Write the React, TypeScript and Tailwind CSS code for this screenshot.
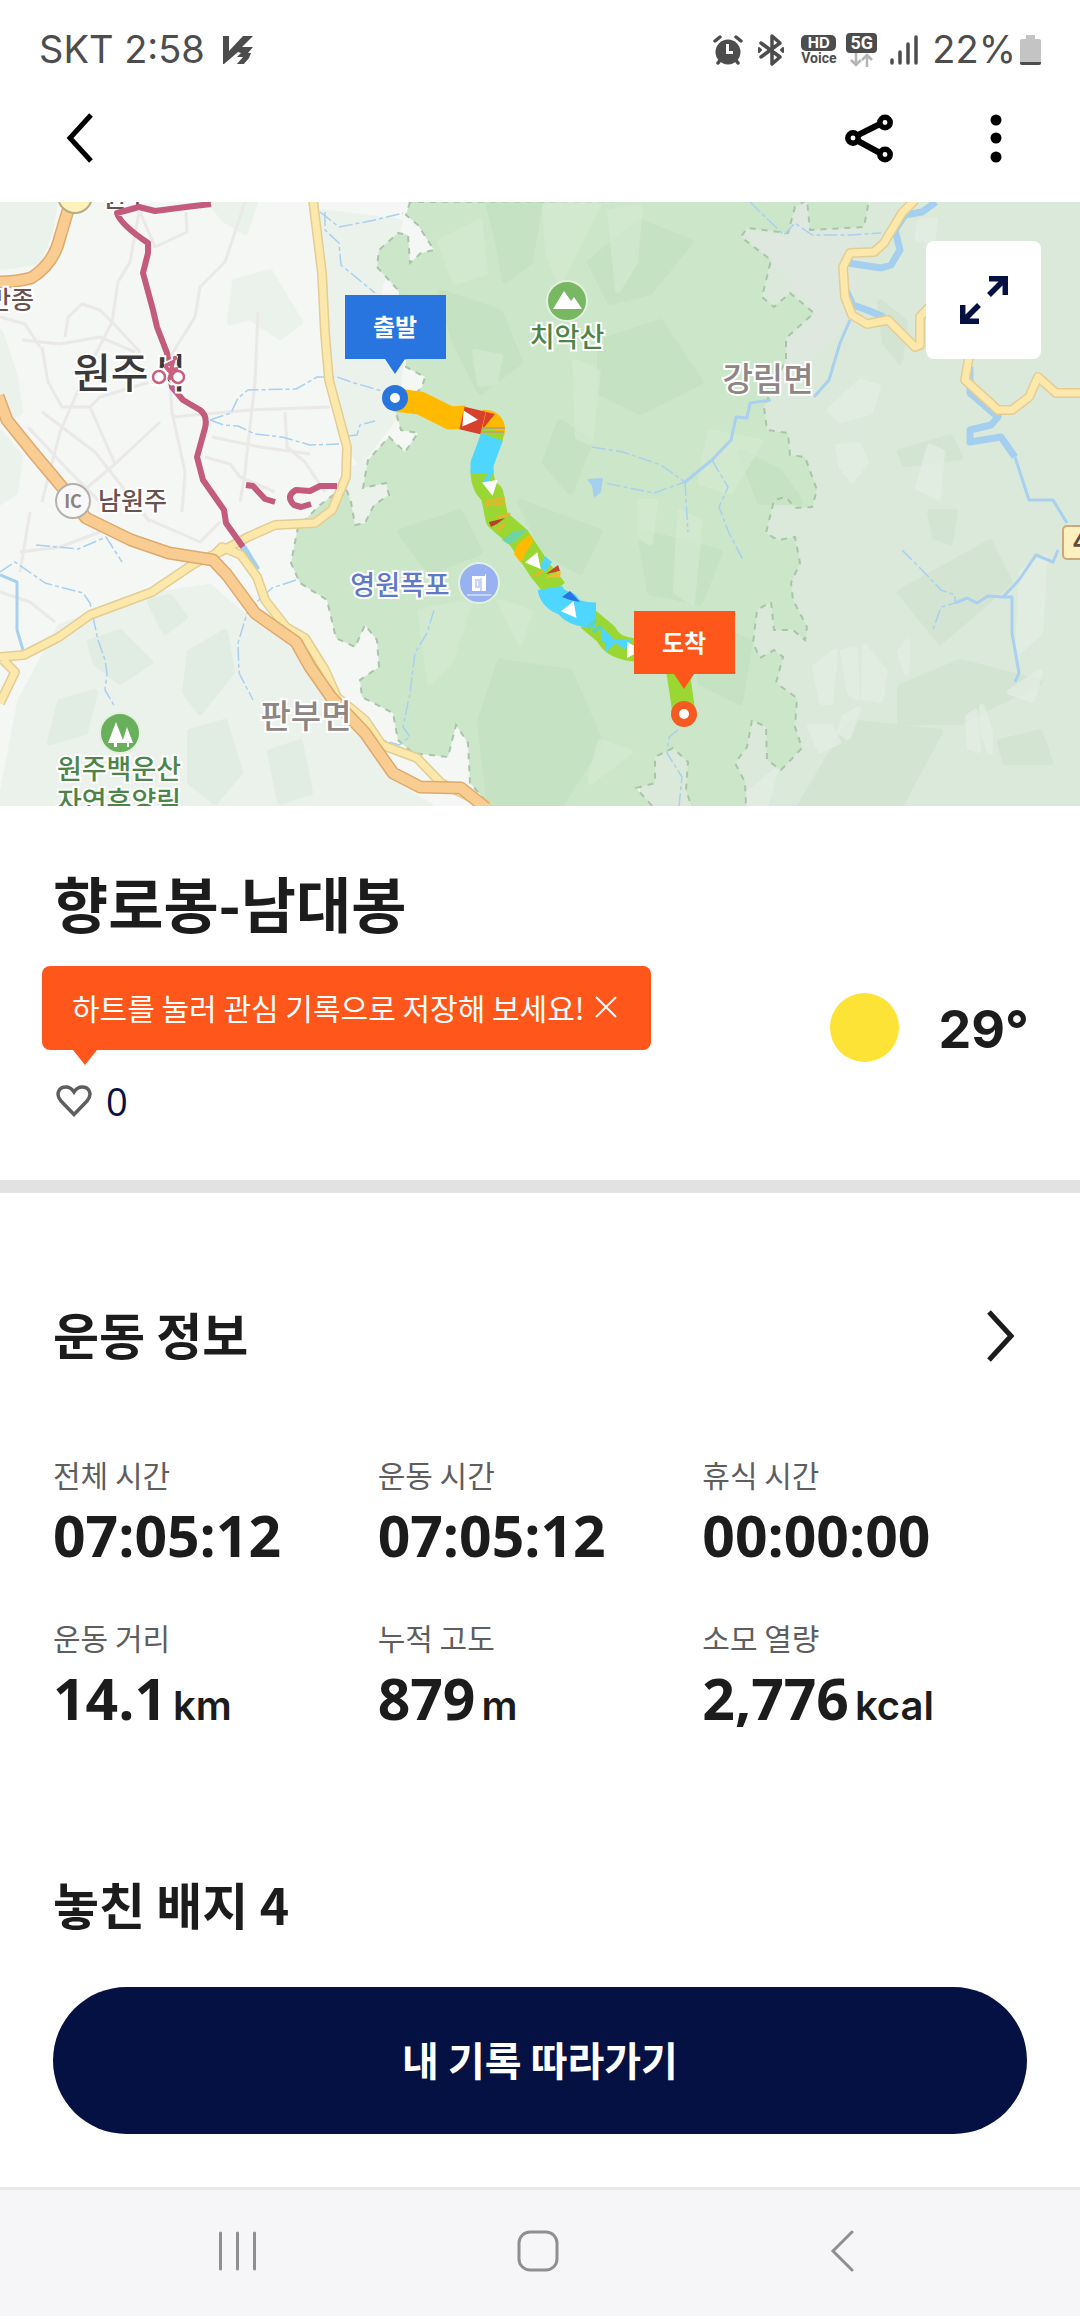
import { useState } from 'react'

interface Stat {
  label: string
  value: string
  unit?: string
}

const STATS: Stat[] = [
  { label: '전체 시간', value: '07:05:12' },
  { label: '운동 시간', value: '07:05:12' },
  { label: '휴식 시간', value: '00:00:00' },
  { label: '운동 거리', value: '14.1', unit: 'km' },
  { label: '누적 고도', value: '879', unit: 'm' },
  { label: '소모 열량', value: '2,776', unit: 'kcal' },
]

const PARK =
  'M410 0 L406 13 L418 23 L434 48 L421 51 L410 61 L408 33 L398 31 L379 48 L377 65 L398 88 L406 120 L406 165 L425 175 L422 185 L396 211 L401 228 L418 231 L405 250 L389 235 L368 258 L363 286 L386 281 L389 293 L374 303 L365 321 L355 323 L351 300 L345 284 L320 303 L298 325 L291 361 L300 381 L327 398 L336 436 L355 445 L365 423 L377 438 L379 465 L360 478 L362 495 L393 511 L398 538 L413 551 L448 555 L456 523 L468 541 L470 581 L492 606 L654 606 L636 586 L655 581 L655 555 L673 546 L688 560 L686 588 L692 606 L746 606 L745 580 L735 561 L747 545 L752 518 L766 525 L767 558 L781 568 L802 546 L795 525 L797 496 L776 481 L783 455 L774 448 L760 456 L753 441 L757 408 L771 400 L774 428 L793 428 L805 438 L807 425 L793 398 L791 381 L800 361 L795 335 L778 338 L766 331 L774 298 L786 295 L795 306 L812 305 L817 288 L805 255 L790 253 L788 231 L767 228 L764 205 L786 158 L786 136 L814 111 L790 91 L774 105 L762 95 L771 58 L741 35 L747 26 L788 31 L795 5 L807 -2 L810 28 L864 25 L869 -2 Z'

const PARK_DARK = [
  'M488 0 L540 0 L530 60 L505 78 L498 40 Z',
  'M590 60 L640 20 L690 40 L650 90 L610 100 Z',
  'M440 90 L500 110 L520 160 L480 190 L455 140 Z',
  'M600 140 L660 120 L700 180 L640 210 L600 190 Z',
  'M400 330 L460 310 L480 350 L430 370 Z',
  'M520 300 L600 330 L580 370 L545 350 Z',
  'M500 460 L570 470 L600 540 L560 604 L490 604 L480 520 Z',
  'M640 330 L720 350 L700 400 L650 390 Z',
  'M700 420 L750 440 L740 500 L700 480 Z',
  'M560 220 L590 240 L570 290 L545 260 Z',
  'M740 250 L780 270 L800 300 L760 300 Z',
]

const PARK_LIGHT = [
  'M545 5 L600 0 L580 40 L560 80 L548 50 Z',
  'M610 10 L640 5 L635 60 L618 88 Z',
  'M440 40 L480 20 L485 70 L455 80 Z',
  'M475 150 L500 155 L495 180 L480 182 Z',
  'M575 160 L598 170 L590 240 L578 235 Z',
  'M640 300 L655 300 L650 340 L640 335 Z',
  'M680 310 L700 320 L692 400 L676 390 Z',
  'M420 410 L470 400 L450 460 L430 480 Z',
  'M600 540 L630 550 L590 580 Z',
  'M710 230 L760 240 L730 290 L700 280 Z',
  'M500 400 L530 410 L520 440 Z',
]

const EAST_DARK = [
  'M900 390 L990 340 L1010 380 L940 440 Z',
  'M900 485 L960 460 L1040 480 L960 520 L900 520 Z',
  'M850 520 L940 530 L900 604 L800 604 Z',
  'M930 310 L955 310 L950 340 L935 335 Z',
  'M1000 540 L1040 530 L1050 560 L1005 560 Z',
  'M900 250 L950 235 L960 255 L905 262 Z',
  'M880 100 L905 120 L900 160 L885 140 Z',
]

const EAST_LIGHT = [
  'M830 208 L860 180 L878 185 L870 210 L840 218 Z',
  'M838 245 L858 243 L866 260 L852 278 L842 265 Z',
  'M930 245 L942 250 L938 295 L918 285 Z',
  'M815 465 L835 450 L830 500 L822 500 Z',
  'M843 450 L855 448 L857 495 L850 490 Z',
  'M865 445 L885 470 L880 498 L864 495 Z',
  'M810 525 L830 525 L838 540 L820 548 Z',
  'M845 515 L858 508 L848 535 L840 530 Z',
  'M1022 370 L1045 355 L1040 430 L1018 450 Z',
  'M1010 490 L1040 470 L1032 498 Z',
  'M968 515 L975 510 L978 548 L970 545 Z',
  'M982 505 L990 530 L990 550 L983 530 Z',
  'M900 450 L908 440 L906 470 Z',
  'M750 590 L775 570 L765 604 L750 604 Z',
  'M920 20 L935 18 L932 40 L918 36 Z',
]

const WEST_SHADE = [
  'M0 0 L55 0 L50 30 L38 60 L0 65 Z',
  'M235 80 L270 70 L285 95 L300 120 L280 135 L250 115 L230 120 Z',
  'M0 130 L15 175 L20 210 L0 220 Z',
  'M0 230 L20 255 L15 290 L0 300 Z',
  'M60 425 L140 395 L210 385 L250 420 L300 450 L330 500 L390 580 L430 604 L0 604 L20 500 Z',
  'M210 0 L255 0 L245 30 L225 18 Z',
  'M320 10 L400 20 L378 90 L400 165 L395 215 L360 260 L340 230 L330 120 Z',
  'M345 270 L365 262 L390 290 L350 330 L345 300 Z',
]

const WEST_DARK = [
  'M90 440 L120 430 L150 460 L120 480 L95 460 Z',
  'M190 450 L225 430 L232 470 L200 510 L185 490 Z',
  'M60 500 L95 490 L85 530 L50 540 Z',
  'M190 530 L225 520 L240 570 L215 600 L190 580 Z',
  'M270 550 L300 540 L310 590 L280 600 Z',
  'M150 400 L170 395 L185 415 L165 430 Z',
]

const STREETS = [
  'M139 10 L130 60 L118 80 L112 120 L84 175 L60 230 L42 300',
  'M245 0 L225 60 L200 85 L195 115 L170 155',
  'M140 10 L155 45 L187 30 L186 10',
  'M22 138 L60 142 L100 135 L135 150',
  'M42 145 L48 180 L62 205 L90 205 L100 195 L150 180',
  'M65 135 L68 115 L82 102 L100 108 L112 120 L140 150',
  'M258 110 L255 180 L245 270 L240 300',
  'M168 150 L172 210 L185 270 L182 310',
  'M172 215 L250 208 L330 205',
  'M212 235 L260 245 L310 252',
  'M285 210 L287 245 L305 260 L325 290',
  'M28 225 L70 270 L110 310',
  'M90 205 L115 262 L160 220',
  'M42 210 L95 250 L150 320',
  'M115 262 L70 300',
  'M205 255 L230 262 L240 275 L275 290',
  'M30 310 L20 370',
  'M20 350 L60 345 L100 330',
  'M0 390 L30 400 L55 420',
  'M150 318 L200 340 L220 320',
  'M0 115 L25 122 L40 145',
]

const STREAMS = [
  'M320 10 L339 25 L375 18 L403 11',
  'M325 10 L325 28 L339 41 L341 63 L375 91',
  'M210 218 L231 211 L238 196 L248 188 L296 187 L317 175 L337 175 L351 180 L382 189',
  'M210 218 L224 223 L238 224 L255 232 L282 235 L310 243 L339 242',
  'M348 234 L357 233 L360 223 L375 219',
  'M0 370 L15 360 L45 381 L83 391 L90 401 L98 438 L105 458 L107 471 L105 488 L115 505',
  'M296 378 L272 386 L248 408 L238 441 L239 471 L253 498',
  'M434 408 L427 431 L415 451 L410 491 L403 525 L410 535 L399 543 L382 538',
  'M36 343 L78 347 L106 335 L122 360',
  'M750 0 L784 33 L795 21 L812 33 L850 33 L881 31',
  'M592 245 L623 250 L661 263 L685 280 L654 291 L605 281',
  'M685 280 L688 330',
  'M712 258 L728 285 L719 305 L729 331 L743 358',
  'M902 348 L919 365 L941 388 L955 393 L955 401 L941 405 L933 428',
  'M678 528 L669 535 L667 551 L682 575 L679 604',
]

const RIVERS = [
  'M936 0 L922 10 L905 13 L895 28 L900 48 L891 63 L881 66 L848 61',
  'M846 88 L853 103 L867 108 L884 115',
  'M970 165 L970 191 L998 215 L991 223 L970 228 L970 240 L1001 235 L1015 255',
  'M243 345 L257 368',
]

const SMALL_RIVERS = [
  'M850 118 L840 141 L829 178 L814 195',
  'M771 198 L750 201 L747 216 L736 215 L731 238 L712 258 L685 280',
  'M1015 255 L1029 298 L1053 298 L1067 321',
  'M955 401 L967 396 L977 401 L988 394 L1003 395 L1019 378 L1036 353 L1053 360 L1058 348',
  'M1003 395 L1012 395 L1012 431 L1019 471 L1015 480',
  'M0 373 L17 380 L17 428 L23 448',
]

const YELLOW_ROADS = [
  'M313 -2 L322 71 L325 131 L329 178 L347 245 L346 275 L332 308 L315 321 L275 323 L248 335 L220 350 L195 361 L152 390 L90 413 L59 435 L24 453 L0 455',
  'M3 458 L15 470 L0 501',
  'M215 352 L222 345 L241 353 L257 375 L265 398 L286 425 L305 436 L325 468 L337 495 L365 518 L382 543 L417 556 L441 581 L489 604',
  'M915 -2 L902 11 L884 41 L874 50 L850 51 L843 65 L845 95 L852 113 L867 122 L888 118 L915 145 L920 143 L920 115 L933 101 L969 155 L965 178 L998 208 L1012 208 L1029 195 L1038 175 L1056 191 L1082 191',
]

const HIGHWAYS = [
  'M69 5 L60 35 Q54 62 31 76 Q16 80 -2 80',
  'M-2 194 L7 218 L31 248 L62 285 L86 316 L131 338 L169 351 L213 358 L227 373 L255 411 L296 440 L310 465 L331 495 L365 531 L393 571 L420 585 L461 586 L486 606',
]

const BIKE_PATHS = [
  'M211 2 L186 5 L155 9 L139 5 L117 11 Q120 22 148 41 L148 51 L143 71 L153 108 L157 125 L167 151 L172 185 L183 198 L200 208 Q208 214 205 226 L197 255 L203 278 L224 308 L226 321 L243 345',
  'M246 283 L253 284 L265 297 L275 300',
  'M337 284 L320 284 L310 289 L296 288 Q285 294 294 303 L301 305 L311 302',
]

const ARROWS = [
  { x: 469, y: 217, angle: 5 },
  { x: 491, y: 285, angle: 80 },
  { x: 535, y: 360, angle: 50 },
  { x: 571, y: 409, angle: 52 },
  { x: 633, y: 448, angle: 0 },
]

function StatusBar() {
  return (
    <div className="flex h-24 items-center justify-between pl-[39px] pr-[39px] pt-[3px] text-[#4d4d4d]">
      <div className="flex items-center gap-[18px]">
        <span className="font-['Inter',sans-serif] text-[38px]">SKT 2:58</span>
        <svg className="h-7 w-[30px]" viewBox="0 0 30 28" fill="currentColor" aria-hidden="true">
          <path d="M0 0 H6 V15 L20 0 H30 L19 11 H30 L25 17 H28 L26 22 L20 29 H13 L20 21 H14 L18 17 L15 16 L1 28 H0 Z" />
        </svg>
      </div>
      <div className="flex items-center">
        <svg className="mr-[14px] h-[30px] w-[30px]" viewBox="0 0 30 30" aria-hidden="true">
          <circle cx="15" cy="17" r="12.5" fill="currentColor" />
          <path d="M2 6 L7 2 M28 6 L23 2 M5 28 L8 24 M25 28 L22 24" stroke="currentColor" strokeWidth="3.5" strokeLinecap="round" />
          <path d="M14.5 9 V17.5 H20" stroke="white" strokeWidth="3" fill="none" />
        </svg>
        <svg className="mr-4 h-8 w-7" viewBox="0 0 28 32" fill="none" stroke="currentColor" strokeWidth="3.5" strokeLinejoin="round" strokeLinecap="round" aria-hidden="true">
          <path d="M4 9 L23 23 L15 30 V2 L23 9 L4 23" />
          <path d="M2 14 L4 16 L2 18 Z M26 14 L24 16 L26 18 Z" strokeWidth="2" />
        </svg>
        <div className="mr-[10px] flex w-[35px] flex-col items-center">
          <span className="flex h-4 w-full items-center justify-center rounded-[5px] bg-[#4d4d4d] font-['Inter',sans-serif] text-[15px] font-bold leading-none text-white">HD</span>
          <span className="font-['Roboto',sans-serif] text-[14px] font-bold leading-[14px]">Voice</span>
        </div>
        <div className="mr-[13px] flex w-[31px] flex-col items-center">
          <span className="flex h-5 w-full items-center justify-center rounded bg-[#4d4d4d] font-['Roboto',sans-serif] text-lg font-bold leading-none text-white">5G</span>
          <svg className="h-[14px] w-6" viewBox="0 0 24 14" fill="none" stroke="#b5b5b5" strokeWidth="2.5" aria-hidden="true">
            <path d="M6 0 V12 M1 7 L6 12 L11 7 M17 14 V2 M12 7 L17 2 L22 7" />
          </svg>
        </div>
        <svg className="mr-[14px] h-[30px] w-7" viewBox="0 0 28 30" stroke="currentColor" strokeWidth="3.5" strokeLinecap="round" aria-hidden="true">
          <path d="M2 25 V28 M10 17 V28 M18 9 V28 M26 2 V28" />
        </svg>
        <span className="mr-1 font-['Inter',sans-serif] text-[38px]">22%</span>
        <svg className="h-[30px] w-[21px]" viewBox="0 0 21 30" aria-hidden="true">
          <path d="M6 0 H15 V4 H19 Q21 4 21 6 V28 Q21 30 19 30 H2 Q0 30 0 28 V6 Q0 4 2 4 H6 Z" fill="#c4c4c4" />
          <path d="M0 27 H21 V28 Q21 30 19 30 H2 Q0 30 0 28 Z" fill="#4d4d4d" />
        </svg>
      </div>
    </div>
  )
}

function Header() {
  return (
    <header className="flex h-[106px] items-start justify-between pl-[66px] pr-[78px] pt-[17px] text-black">
      <button type="button" aria-label="뒤로">
        <svg className="h-[50px] w-7" viewBox="0 0 28 50" fill="none" stroke="currentColor" strokeWidth="5">
          <path d="M25 2 L4 25 L25 48" />
        </svg>
      </button>
      <div className="flex items-center gap-[97px]">
        <button type="button" aria-label="공유">
          <svg className="h-[50px] w-12" viewBox="0 0 48 50" fill="none" stroke="currentColor" strokeWidth="5.5">
            <path d="M13 22 L35 11 M13 28 L35 40" strokeWidth="6" />
            <circle cx="8" cy="25" r="5.2" />
            <circle cx="40" cy="9.5" r="5.2" />
            <circle cx="40" cy="41.5" r="5.2" />
          </svg>
        </button>
        <button type="button" aria-label="더보기">
          <svg className="h-[50px] w-3" viewBox="0 0 12 50" fill="currentColor">
            <circle cx="6" cy="7" r="5.5" />
            <circle cx="6" cy="25" r="5.5" />
            <circle cx="6" cy="44" r="5.5" />
          </svg>
        </button>
      </div>
    </header>
  )
}

function Lines({ items, color, width, dash }: { items: string[]; color: string; width: number; dash?: string }) {
  return (
    <g fill="none" stroke={color} strokeWidth={width} strokeLinejoin="round" strokeDasharray={dash}>
      {items.map(d => (
        <path key={d} d={d} />
      ))}
    </g>
  )
}

function Areas({ items, color }: { items: string[]; color: string }) {
  return (
    <g fill={color} stroke={color} strokeWidth="6" strokeLinejoin="round" opacity="0.6">
      {items.map(d => (
        <path key={d} d={d} />
      ))}
    </g>
  )
}

function RouteMap() {
  return (
    <section className="relative" aria-label="경로 지도">
      <svg
        className="block w-full bg-[#f4f7f4] font-['Noto_Sans_CJK_KR',sans-serif]"
        viewBox="0 0 1080 604"
        role="img"
      >
        <Areas items={WEST_SHADE} color="#e6efe8" />
        <Areas items={WEST_DARK} color="#dce9de" />
        <path d="M640 0 H1080 V604 H640 Z" fill="#dbe9da" />
        <path d="M741 28 L790 35 L800 0 L868 0 L850 120 L790 180 L770 200 L764 170 L814 111 L771 58 Z" fill="#dfe8df" />
        <Areas items={EAST_DARK} color="#d0e2cf" />
        <Areas items={EAST_LIGHT} color="#e7f0e6" />
        <path d={PARK} fill="#cce6ca" />
        <Areas items={PARK_DARK} color="#c1e0bf" />
        <Areas items={PARK_LIGHT} color="#d6ebd3" />
        <path d={PARK} fill="none" stroke="#a9c4a8" strokeWidth="2" strokeDasharray="6 6" />

        <Lines items={STREETS} color="#ebe8e8" width={3} />
        <Lines items={STREAMS} color="#a9d0ee" width={1.5} dash="14 3 4 3" />
        <Lines items={SMALL_RIVERS} color="#a9d0ee" width={3} />
        <Lines items={RIVERS} color="#a5cfee" width={7} />
        <path d="M587 277 L603 276 L601 290 L594 296 L592 284 Z" fill="#a5cfee" />

        <Lines items={YELLOW_ROADS} color="#e3cd93" width={10} />
        <Lines items={YELLOW_ROADS} color="#fde8ab" width={7} />
        <Lines items={HIGHWAYS} color="#dfa96c" width={13} />
        <Lines items={HIGHWAYS} color="#f9cd92" width={10} />

        {/* junctions and road number */}
        <circle cx="75" cy="-6" r="17" fill="#fff1ba" stroke="#b5ab86" strokeWidth="2" />
        <circle cx="73" cy="299" r="17" fill="#f8f8f8" stroke="#b5b0ae" strokeWidth="2" />
        <text x="73" y="306" textAnchor="middle" fontSize="18" fontWeight="700" fill="#8a8280">IC</text>
        <rect x="1063" y="324" width="40" height="33" rx="4" fill="#fdf0bf" stroke="#cfa77a" strokeWidth="2" />
        <text x="1073" y="349" fontSize="24" fontWeight="700" fill="#5f4a42">4</text>

        <g fill="#6a5250" stroke="white" strokeWidth="4" paintOrder="stroke" fontWeight="500" fontSize="25">
          <text x="103" y="5">원주</text>
          <text x="34" y="107" textAnchor="end">만종</text>
          <text x="98" y="308">남원주</text>
        </g>
        <Lines items={BIKE_PATHS} color="#c25b7c" width={6} />
        <text x="73" y="186" fontSize="41" fontWeight="500" fill="#3a3a3a" stroke="white" strokeWidth="4" paintOrder="stroke">원주시</text>
        <g fill="none" stroke="white" strokeWidth="7">
          <circle cx="159" cy="175" r="6" />
          <circle cx="178" cy="175" r="6" />
          <path d="M165 164 L173 160 L171 168 L178 167 M165 164 L171 171 L169 178" />
        </g>
        <g fill="white" stroke="#c9607f" strokeWidth="2.5">
          <circle cx="159" cy="175" r="6" />
          <circle cx="178" cy="175" r="6" />
          <path d="M165 164 L173 160 L171 168 L178 167 M165 164 L171 171 L169 178" fill="none" strokeWidth="4" />
          <circle cx="175" cy="156" r="1" />
        </g>
        <g fill="#8e8683" stroke="white" strokeWidth="4" paintOrder="stroke" fontWeight="500" fontSize="33" textAnchor="middle">
          <text x="768" y="189">강림면</text>
          <text x="306" y="526">판부면</text>
        </g>
        <g fill="#4d8549" stroke="white" strokeWidth="4" paintOrder="stroke" fontWeight="500" fontSize="27" textAnchor="middle">
          <text x="567" y="145">치악산</text>
          <text x="119" y="577">원주백운산</text>
          <text x="119" y="609">자연휴양림</text>
        </g>
        <text x="400" y="393" fontSize="27" fontWeight="500" fill="#6079c6" stroke="white" strokeWidth="4" paintOrder="stroke" textAnchor="middle">영원폭포</text>

        <g stroke="#e3f1e0" strokeWidth="2">
          <circle cx="567" cy="99" r="20" fill="#78b863" />
          <circle cx="120" cy="531" r="20" fill="#69b05c" />
          <circle cx="479" cy="381" r="20" fill="#98b1f0" />
        </g>
        <path d="M553 107 L564 89 L571 99 L574 95 L582 107 Z" fill="white" />
        <path d="M108 541 L116 520 L124 541 Z M122 541 L127 525 L133 541 Z M114 541 h3 v4 h-3 Z M127 541 h2 v4 h-2 Z" fill="white" />
        <path d="M472 374 H485 V372 H486 V389 H472 Z" fill="white" />
        <path d="M476 378 H479 V385 H476 Z M481 376 V389 M467 393 H491" stroke="#c7d4f7" strokeWidth="2" fill="none" />

        {/* recorded track, colored by pace */}
        <g fill="none" strokeWidth="23" strokeLinejoin="round">
          <path d="M395 198 L420 201 L450 216 L466 215" stroke="#ffba00" />
          <path d="M481 219 L489 220 Q495 223 493 231" stroke="#ffba00" />
          <path d="M493 228 L491 238" stroke="#9bd732" />
          <path d="M482 268 Q482 285 492 292 L497 317 L519 336 L540 368 L556 388" stroke="#9bd732" />
          <path d="M492 235 L482 262 L482 271" stroke="#4fd6ff" />
          <path d="M588 417 L606 432 Q614 448 640 448" stroke="#9bd732" />
          <path d="M677 465 L681 490 L684 512" stroke="#9bd732" />
          <path d="M550 386 Q552 398 567 402 Q572 413 596 413" stroke="#4fd6ff" strokeWidth="25" />
          <path d="M462 216 L483 221" stroke="#d8402e" />
        </g>
        <path d="M482 228 L495 212 L486 210 Z" fill="#d8402e" />
        <path d="M482 226 H505 M481 230 H504" stroke="#b7a86c" strokeWidth="2" />
        <path d="M403 206 L412 190 L424 190 L419 205 Z" fill="#ffba00" />
        <path d="M482 280 L493 266 L488 285 Z M600 424 L613 436 L602 440 Z M604 436 L631 438 L625 448 L616 441 L606 450 Z" fill="#4fd6ff" />
        <path d="M502 338 L514 329 L527 328 L514 340 L508 342 Z" fill="#6fd3a8" />
        <path d="M517 343 L530 332 L533 340 L526 350 L521 361 L514 352 Z" fill="#ffba00" />
        <path d="M485 300 L505 296 M486 303 L505 301 M497 316 L510 312 M497 328 L505 322 M535 374 L545 367" stroke="#e0b82c" strokeWidth="3" />
        <path d="M489 320 L505 316 L497 322 L491 325 Z" fill="#b5412b" />
        <path d="M540 365 L545 354 L552 360 L545 370 Z" fill="#4fd6ff" />
        <path d="M546 372 L558 363 L560 369 Z" fill="#c2492a" />
        <path d="M543 376 L561 369 L560 375 Z" fill="#ecc02c" />
        <path d="M562 395 L570 389 L580 400 L570 398 Z" fill="#2875e0" />
        <path d="M588 426 L596 418 M593 430 L601 424" stroke="#61d3b4" strokeWidth="4" />
        {ARROWS.map(a => (
          <path key={a.x} d="M-6 -8 L9 0 L-6 8 Z" fill="white" transform={`translate(${a.x} ${a.y}) rotate(${a.angle})`} />
        ))}

        {/* start / finish markers */}
        <circle cx="395" cy="196" r="9" fill="white" stroke="#2875dc" strokeWidth="8" />
        <circle cx="684" cy="512" r="9" fill="white" stroke="#f55a22" strokeWidth="8" />
        <path d="M345 93 H446 V157 H405 L395 172 L385 157 H345 Z" fill="#2875e0" />
        <path d="M634 409 H735 V472 H694 L684 487 L674 472 H634 Z" fill="#ff561b" />
        <g fill="white" fontSize="24" fontWeight="700" textAnchor="middle">
          <text x="395" y="134">출발</text>
          <text x="684" y="450">도착</text>
        </g>
      </svg>
      <button
        type="button"
        aria-label="지도 확대"
        className="absolute right-[39px] top-[39px] flex h-[118px] w-[115px] items-center justify-center rounded-lg bg-white text-[#051142]"
      >
        <svg className="h-12 w-12" viewBox="0 0 48 48" fill="none" stroke="currentColor" strokeWidth="5.5">
          <path d="M29 2.7 H45.3 V19 M45 3 L29 19" />
          <path d="M2.7 29 V45.3 H19 M3 45 L19 29" />
        </svg>
      </button>
    </section>
  )
}

export default function App() {
  const [showTip, setShowTip] = useState(true)
  const [liked, setLiked] = useState(false)

  return (
    <div className="flex min-h-screen flex-col bg-white font-['Noto_Sans_CJK_KR',sans-serif] text-[#1c1c1c]">
      <StatusBar />
      <Header />
      <RouteMap />

      {/* Title, like and weather */}
      <section className="pb-[57px] pl-[53px] pr-[51px] pt-14">
        <h1 className="text-[60px] font-bold leading-[80px]">향로봉-남대봉</h1>
        <div className="flex items-start justify-between">
          <div className="-ml-[11px] pt-6">
            <div className={showTip ? 'relative' : 'invisible relative'}>
              <div className="flex h-[84px] items-center gap-[10px] rounded-lg bg-[#ff561b] pb-[2px] pl-[30px] pr-[34px] text-[30px] text-white">
                <p>하트를 눌러 관심 기록으로 저장해 보세요!</p>
                <button type="button" aria-label="닫기" onClick={() => setShowTip(false)}>
                  <svg className="h-[22px] w-[22px]" viewBox="0 0 22 22" stroke="currentColor" strokeWidth="2">
                    <path d="M1 1 L21 21 M21 1 L1 21" />
                  </svg>
                </button>
              </div>
              <svg className="absolute left-[31px] top-full h-[15px] w-6" viewBox="0 0 24 15" aria-hidden="true">
                <path d="M0 0 H24 L12 15 Z" fill="#ff561b" />
              </svg>
            </div>
            <button
              type="button"
              aria-pressed={liked}
              onClick={() => setLiked(!liked)}
              className="ml-[14px] mt-[29px] flex items-center gap-[14px] font-['Open_Sans',sans-serif] text-[38px] font-medium leading-[44px] text-[#051142]"
            >
              <svg className="h-8 w-9" viewBox="0 0 36 32" fill={liked ? '#ff561b' : 'none'} stroke="#5e5e5e" strokeWidth="3.5">
                <path d="M18 29.5 L5 16 C-1 9 3 2 10 2 C14 2 16 4 18 7 C20 4 22 2 26 2 C33 2 37 9 31 16 Z" />
              </svg>
              {liked ? 1 : 0}
            </button>
          </div>
          <div className="flex items-center gap-10 pt-[51px]">
            <span className="h-[69px] w-[69px] rounded-full bg-[#fde335]" role="img" aria-label="맑음" />
            <span className="pt-1 font-['Inter',sans-serif] text-[52px] font-bold leading-none">29°</span>
          </div>
        </div>
      </section>

      <div className="h-[13px] bg-[#e2e2e2]" />

      {/* Workout info */}
      <section className="px-[53px] pt-[104px]">
        <div className="flex items-center justify-between pr-[13px]">
          <h2 className="pb-[6px] text-[50px] font-bold leading-[72px]">운동 정보</h2>
          <button type="button" aria-label="운동 정보 더보기">
            <svg className="h-[52px] w-7" viewBox="0 0 28 52" fill="none" stroke="currentColor" strokeWidth="5">
              <path d="M3 2 L25 26 L3 50" />
            </svg>
          </button>
        </div>
        <dl className="mt-[77px] grid grid-cols-3 gap-y-[46px]">
          {STATS.map(stat => (
            <div key={stat.label}>
              <dt className="text-[30px] leading-[44px] text-[#5e5e5e]">{stat.label}</dt>
              <dd className="mt-[5px] flex items-baseline gap-[6px] font-['Open_Sans',sans-serif] text-[57px] font-bold leading-[68px]">
                {stat.value}
                {stat.unit && <span className="font-['Inter',sans-serif] text-[40px] font-semibold">{stat.unit}</span>}
              </dd>
            </div>
          ))}
        </dl>
      </section>

      <section className="px-[53px] pt-[127px]">
        <h2 className="text-[50px] font-bold leading-[72px]">놓친 배지 4</h2>
      </section>

      <div className="mt-auto px-[53px] pb-[53px]">
        <button type="button" className="h-[147px] w-full rounded-full bg-[#051142] pb-[3px] text-[40px] font-bold text-white">
          내 기록 따라가기
        </button>
      </div>

      {/* System navigation */}
      <nav className="flex h-[129px] items-center justify-between border-t-[3px] border-[#e8e8e8] bg-[#f6f6f8] pb-1 pl-[218px] pr-[226px] text-[#8f8f8f]">
        <button type="button" aria-label="최근 앱">
          <svg className="h-10 w-10" viewBox="0 0 40 40" stroke="currentColor" strokeWidth="3" strokeLinecap="round">
            <path d="M2.5 2 V38 M19.5 2 V38 M36.5 2 V38" />
          </svg>
        </button>
        <button type="button" aria-label="홈">
          <svg className="h-[42px] w-[42px]" viewBox="0 0 42 42" fill="none" stroke="currentColor" strokeWidth="3">
            <rect x="2" y="2" width="38" height="38" rx="11" />
          </svg>
        </button>
        <button type="button" aria-label="뒤로 가기" className="pl-3">
          <svg className="h-[42px] w-6" viewBox="0 0 24 42" fill="none" stroke="currentColor" strokeWidth="3" strokeLinecap="round">
            <path d="M22 2 L3 21 L22 40" />
          </svg>
        </button>
      </nav>
    </div>
  )
}
